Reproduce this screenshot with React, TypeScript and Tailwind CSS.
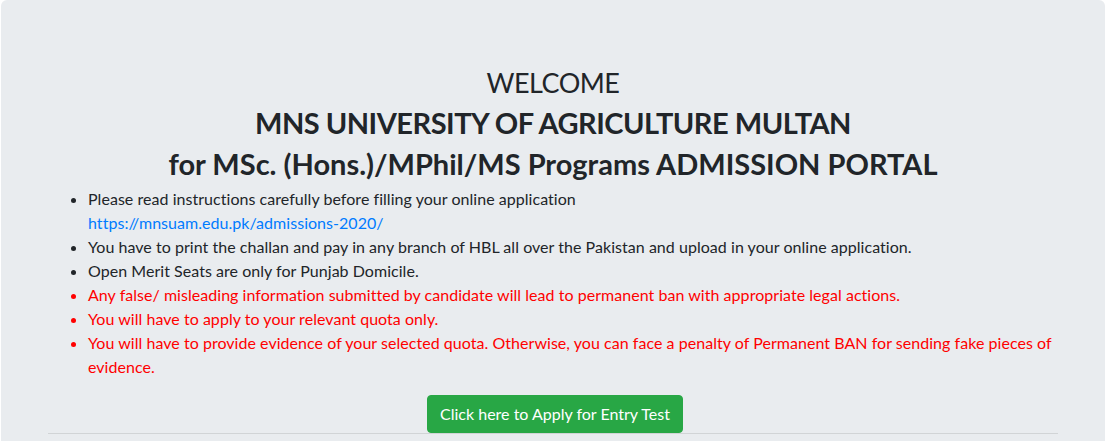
import React from "react";

export default function App() {
  return (
    <div className="w-[1110px] h-[441px] overflow-hidden bg-white" style={{ fontFamily: "Lato, sans-serif" }}>
      <div className="ml-[1px] w-[1104px] bg-[#e9ecef] rounded-md pt-16 pb-8 px-[47px] text-[#212529]">
        <h3 className="text-center text-[27px] tracking-[-0.5px] leading-[33.6px] pt-[2px] mb-[6px]">WELCOME</h3>
        <h3 className="text-center text-[29px] tracking-[-0.5px] leading-[33.6px] mb-2 font-bold">MNS UNIVERSITY OF AGRICULTURE MULTAN</h3>
        <h3 className="text-center text-[29px] leading-[33.6px] mb-[6px] font-bold">for MSc. (Hons.)/MPhil/MS Programs ADMISSION PORTAL</h3>
        <ul className="list-disc pl-10 text-base leading-6 mb-4 tracking-[0.04px]">
          <li>Please read instructions carefully before filling your online application<br /><a className="text-[#007bff]" href="#">https://mnsuam.edu.pk/admissions-2020/</a></li>
          <li>You have to print the challan and pay in any branch of HBL all over the Pakistan and upload in your online application.</li>
          <li>Open Merit Seats are only for Punjab Domicile.</li>
          <li className="text-[#ff0000]">Any false/ misleading information submitted by candidate will lead to permanent ban with appropriate legal actions.</li>
          <li className="text-[#ff0000]">You will have to apply to your relevant quota only.</li>
          <li className="text-[#ff0000]">You will have to provide evidence of your selected quota. Otherwise, you can face a penalty of Permanent BAN for sending fake pieces of evidence.</li>
        </ul>
        <div className="flex justify-center pl-[4px]">
          <button className="bg-[#28a745] text-white rounded px-3 py-1.5 text-base leading-6 border border-[#28a745]">Click here to Apply for Entry Test</button>
        </div>
        <hr className="border-black/10" />
      </div>
    </div>
  );
}
